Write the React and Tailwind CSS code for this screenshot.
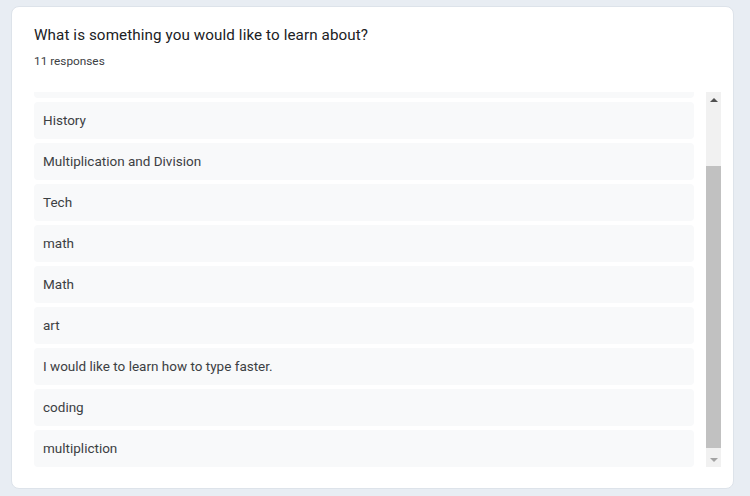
import React from 'react';

const answers = [
  'History',
  'Multiplication and Division',
  'Tech',
  'math',
  'Math',
  'art',
  'I would like to learn how to type faster.',
  'coding',
  'multipliction',
];

const App = () => {
  return (
    <div className="w-[750px] h-[496px] bg-[#e8edf3] pt-[6px] pl-[11px] font-['Roboto',sans-serif] overflow-hidden">
      <div className="w-[723px] h-[483px] bg-white rounded-[8px] border border-[#dde3ea] pl-[22px] pr-[11px] pt-[18px]">
        {/* Question header */}
        <h2 className="text-[15.2px] leading-[20px] text-[#202124] tracking-[0.1px]">
          What is something you would like to learn about?
        </h2>
        <p className="mt-[9px] text-[11.8px] leading-[14px] text-[#3c4043]">11 responses</p>

        {/* Responses list with scrollbar */}
        <div className="mt-[24px] flex h-[375px]">
          <div className="w-[660px] h-full overflow-hidden">
            <div className="-mt-[31px] flex flex-col gap-[4px]">
              {/* row scrolled out of view above */}
              <div className="h-[37px] bg-[#f8f9fa] rounded-[4px]" />
              {answers.map((a, i) => (
                <div
                  key={i}
                  className="h-[37px] flex items-center px-[9px] bg-[#f8f9fa] rounded-[4px] text-[13.5px] text-[#3c4043]"
                >
                  {a}
                </div>
              ))}
            </div>
          </div>

          {/* Scrollbar */}
          <div className="ml-[12px] w-[15px] h-full bg-[#f1f1f1] flex flex-col">
            <div className="h-[15px] flex items-center justify-center">
              <div className="w-0 h-0 border-l-[4px] border-r-[4px] border-b-[4px] border-l-transparent border-r-transparent border-b-[#505050]" />
            </div>
            <div className="flex-1 flex flex-col pt-[59px] pb-[4px]">
              <div className="flex-1 bg-[#c1c1c1]" />
            </div>
            <div className="h-[15px] flex items-center justify-center">
              <div className="w-0 h-0 border-l-[4px] border-r-[4px] border-t-[4px] border-l-transparent border-r-transparent border-t-[#a3a3a3]" />
            </div>
          </div>
        </div>
      </div>
    </div>
  );
};

export default App;
